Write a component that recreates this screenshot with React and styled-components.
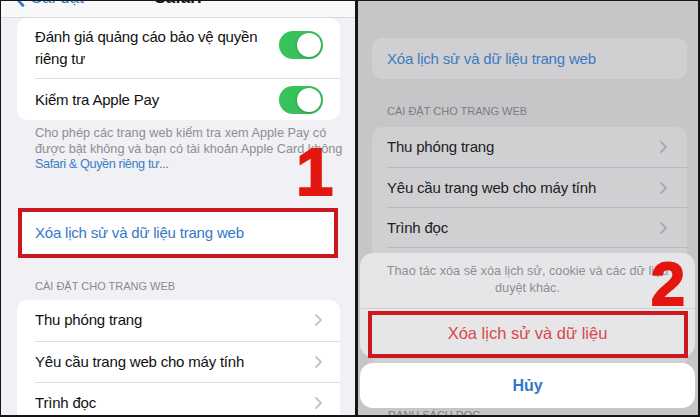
import React from 'react';
import styled, { createGlobalStyle } from 'styled-components';

const Global = createGlobalStyle`
  html, body { margin: 0; padding: 0; background: #161616; }
  body { font-family: "Liberation Sans", Arial, sans-serif; -webkit-font-smoothing: antialiased; }
  * { box-sizing: border-box; }
`;

const Frame = styled.div`
  width: 700px;
  height: 417px;
  display: flex;
  gap: 3px;
  padding: 1px 2px 2px 1px;
  background: #161616;
  overflow: hidden;
`;

const Phone = styled.div`
  position: relative;
  overflow: hidden;
  height: 100%;
  display: flex;
  flex-direction: column;
  flex: ${p => (p.$dim ? '1' : '0 0 354px')};
  background: ${p => (p.$dim ? '#c6c6c9' : '#f0f0f5')};
  padding-top: ${p => p.$top || 0}px;
`;

const NavBar = styled.div`
  height: 17px;
  flex-shrink: 0;
  background: #f8f8f9;
  border-bottom: 1px solid #dadadd;
  display: grid;
  grid-template-columns: 1fr auto 1fr;
  grid-template-rows: 16px;
  align-items: start;
  overflow: hidden;
  padding: 0 13px;
`;

const NavItem = styled.span`
  font-size: 17px;
  line-height: 20px;
  margin-top: -13px;
  display: flex;
  align-items: center;
  gap: 5px;
  color: ${p => (p.$back ? '#2f7ad0' : '#111')};
  font-weight: ${p => (p.$back ? 400 : 600)};
`;

const Card = styled.div`
  margin: ${p => p.$m};
  background: ${p => (p.$dim ? '#d0d0d3' : '#fff')};
  border-radius: 10px;
  overflow: hidden;
  flex-shrink: 0;
`;

const Row = styled.div`
  padding-left: ${p => p.$inset}px;
  display: flex;
`;

const RowBody = styled.div`
  flex: 1;
  display: flex;
  align-items: center;
  gap: 12px;
  min-height: ${p => p.$h}px;
  padding: ${p => p.$pad || '0'};
  padding-right: ${p => p.$right}px;
  border-top: ${p => (p.$first ? 'none' : `1px solid ${p.$dim ? '#b9b9bd' : '#dedee2'}`)};
`;

const Label = styled.span`
  flex: 1;
  font-size: 15px;
  line-height: 22px;
  letter-spacing: -0.2px;
  color: ${p => p.$color || (p.$dim ? '#202022' : '#111')};
`;

const Toggle = styled.span`
  width: 44px;
  height: 28px;
  border-radius: 14px;
  background: #37c25b;
  position: relative;
  flex-shrink: 0;
  margin-bottom: ${p => p.$lift || 0}px;
  &::after {
    content: '';
    position: absolute;
    top: 2px;
    right: 2px;
    width: 24px;
    height: 24px;
    border-radius: 50%;
    background: #fff;
    box-shadow: 0 1px 3px rgba(0, 0, 0, 0.25);
  }
`;

const Footer = styled.div`
  padding: 6px 0 0 34px;
  font-size: 12.7px;
  line-height: 15.5px;
  color: #8e8e93;
  white-space: nowrap;
  flex-shrink: 0;
`;

const FooterLink = styled.span`
  color: #3b7fc6;
  letter-spacing: -0.4px;
`;

const HighlightCard = styled.div`
  margin: 35px 17px 0 17px;
  height: 50px;
  flex-shrink: 0;
  background: #fff;
  border: 4px solid #c9191e;
  display: flex;
  align-items: center;
  padding-left: 13px;
`;

const SectionHeader = styled.div`
  margin: ${p => p.$m};
  font-size: 11px;
  line-height: 16px;
  color: ${p => (p.$dim ? '#7c7c80' : '#8a8a8e')};
  flex-shrink: 0;
  white-space: nowrap;
`;

const BigNumber = styled.span`
  position: absolute;
  left: ${p => p.$x}px;
  top: ${p => p.$y}px;
  font-family: "Liberation Sans", Arial, sans-serif;
  font-weight: 700;
  font-size: ${p => p.$size}px;
  line-height: 1;
  color: #e3170f;
  -webkit-text-stroke: 2px #e3170f;
  z-index: 3;
`;

const Sheet = styled.div`
  position: absolute;
  left: 2px;
  right: 3px;
  bottom: 7px;
  display: flex;
  flex-direction: column;
  gap: 6px;
  z-index: 2;
`;

const SheetGroup = styled.div`
  background: #e6e6e8;
  border-radius: 13px;
  display: flex;
  flex-direction: column;
`;

const SheetMessage = styled.div`
  padding: 9.5px 16px 11.5px;
  text-align: center;
  font-size: 12.7px;
  line-height: 17px;
  color: #8e8e93;
`;

const SheetButton = styled.div`
  position: relative;
  height: ${p => p.$h}px;
  display: flex;
  align-items: center;
  justify-content: center;
  font-size: ${p => (p.$bold ? 16 : 16.5)}px;
  font-weight: ${p => (p.$bold ? 700 : 400)};
  color: ${p => p.$color};
  background: ${p => p.$bg || 'transparent'};
  border-radius: ${p => (p.$bg ? '13px' : '0')};
  border-top: ${p => (p.$sep ? '1px solid #d2d2d5' : 'none')};
`;

const HighlightBox = styled.span`
  position: absolute;
  top: 2px;
  left: 8px;
  right: 7px;
  bottom: -1px;
  border: 4px solid #c9191e;
`;

const Chevron = ({ dim }) => (
  <svg width="7" height="12" viewBox="0 0 7 12" style={{ flexShrink: 0 }}>
    <path d="M1 1 L6 6 L1 11" fill="none" stroke={dim ? '#a9a9ad' : '#c4c4c8'} strokeWidth="1.8" strokeLinecap="round" strokeLinejoin="round" />
  </svg>
);

const BackChevron = () => (
  <svg width="11" height="18" viewBox="0 0 11 18">
    <path d="M9 1.5 L2 9 L9 16.5" fill="none" stroke="#2f7ad0" strokeWidth="2.6" strokeLinecap="round" strokeLinejoin="round" />
  </svg>
);

const siteRows = ['Thu phóng trang', 'Yêu cầu trang web cho máy tính', 'Trình đọc'];
const siteRowsMore = ['Camera', 'Micrô', 'Vị trí'];

export default function App() {
  return (
    <>
      <Global />
      <Frame>
        <Phone>
          <NavBar>
            <NavItem $back>
              <BackChevron />
              Cài đặt
            </NavItem>
            <NavItem>Safari</NavItem>
            <span />
          </NavBar>

          <Card $m="0 15px 0 16px">
            <Row $inset={18}>
              <RowBody $first $h={60} $pad="8px 0" $right={17}>
                <Label>Đánh giá quảng cáo bảo vệ quyền riêng tư</Label>
                <Toggle $lift={6} />
              </RowBody>
            </Row>
            <Row $inset={18}>
              <RowBody $h={42} $right={17}>
                <Label>Kiểm tra Apple Pay</Label>
                <Toggle />
              </RowBody>
            </Row>
          </Card>

          <Footer>
            Cho phép các trang web kiểm tra xem Apple Pay có
            <br />
            được bật không và bạn có tài khoản Apple Card không
            <br />
            <FooterLink>Safari &amp; Quyền riêng tư...</FooterLink>
          </Footer>

          <HighlightCard>
            <Label $color="#3478c6">Xóa lịch sử và dữ liệu trang web</Label>
          </HighlightCard>

          <SectionHeader $m="20px 0 0 34px">CÀI ĐẶT CHO TRANG WEB</SectionHeader>

          <Card $m="6px 15px 0 16px">
            {siteRows.map((t, i) => (
              <Row key={t} $inset={18}>
                <RowBody $first={i === 0} $h={41} $right={18}>
                  <Label>{t}</Label>
                  <Chevron />
                </RowBody>
              </Row>
            ))}
          </Card>

          <BigNumber $x={295} $y={137} $size={67}>1</BigNumber>
        </Phone>

        <Phone $dim $top={37}>
          <Card $dim $m="0 11px 0 14px">
            <Row $inset={15}>
              <RowBody $first $h={41} $right={15}>
                <Label $color="#3a7bc0">Xóa lịch sử và dữ liệu trang web</Label>
              </RowBody>
            </Row>
          </Card>

          <SectionHeader $dim $m="24px 0 0 29px">CÀI ĐẶT CHO TRANG WEB</SectionHeader>

          <Card $dim $m="8px 11px 0 14px">
            {[...siteRows, ...siteRowsMore].map((t, i) => (
              <Row key={t} $inset={15}>
                <RowBody $dim $first={i === 0} $h={40} $right={20}>
                  <Label $dim>{t}</Label>
                  <Chevron dim />
                </RowBody>
              </Row>
            ))}
          </Card>

          <SectionHeader $dim $m="40px 0 0 30px">DANH SÁCH ĐỌC</SectionHeader>

          <Sheet>
            <SheetGroup>
              <SheetMessage>
                Thao tác xóa sẽ xóa lịch sử, cookie và các dữ liệu
                <br />
                duyệt khác.
              </SheetMessage>
              <SheetButton $sep $h={49} $color="#d9484b">
                Xóa lịch sử và dữ liệu
                <HighlightBox />
              </SheetButton>
            </SheetGroup>
            <SheetButton $bold $h={45} $bg="#fff" $color="#2f78c6">
              Hủy
            </SheetButton>
          </Sheet>

          <BigNumber $x={293} $y={253} $size={61}>2</BigNumber>
        </Phone>
      </Frame>
    </>
  );
}
